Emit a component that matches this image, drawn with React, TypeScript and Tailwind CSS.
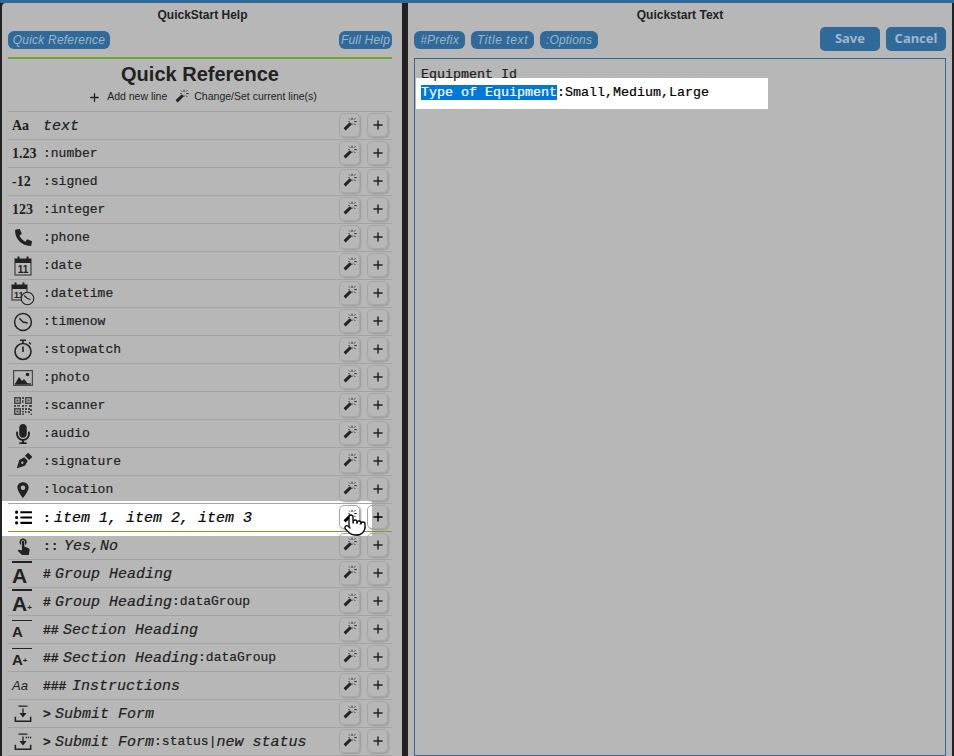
import React from 'react';
import { Plus, Pointer } from 'lucide-react';
import { FaPhoneAlt, FaMicrophone, FaListUl } from 'react-icons/fa';
import { IoLocationSharp } from 'react-icons/io5';
import { MdTouchApp } from 'react-icons/md';

const mono = "font-['Liberation_Mono','Courier_New',monospace] [-webkit-text-stroke:0.2px_currentColor]";

function WandIcon() {
  return (
    <svg width="16" height="16" viewBox="0 0 16 16" fill="none" stroke="currentColor">
      <path d="M2.6 12.4L8.8 6.2" strokeWidth="3" />
      <path d="M10 .8v2.2M10 6.4v1.4M12.2 4.6h2.6M6.4 4.6h1.2M12 2.6l1.4-1.4M12 6.6l1.4 1.4M8 2.6L7 1.6" strokeWidth="0.9" />
    </svg>
  );
}

function NibIcon() {
  return (
    <svg width="17" height="17" viewBox="0 0 17 17">
      <g transform="rotate(45 8.5 8.5)">
        <rect x="5.5" y="-1" width="6" height="4.5" fill="currentColor" />
        <path fillRule="evenodd" d="M8.5 18L4.5 10.5 6 5h5l1.5 5.5zM8.5 9a1.2 1.2 0 100 2.4 1.2 1.2 0 000-2.4z" fill="currentColor" />
      </g>
    </svg>
  );
}

function NumIcon({ label }: { label: string }) {
  return <span className="w-[30px] pl-[4px] font-['Liberation_Serif',serif] text-[14px] font-bold leading-none">{label}</span>;
}

function CalendarIcon() {
  return (
    <svg width="18" height="20" viewBox="0 0 18 20">
      <rect x="1" y="3" width="16" height="16" fill="none" stroke="currentColor" strokeWidth="1.2" opacity="0.8" />
      <rect x="1" y="3" width="16" height="4" fill="currentColor" />
      <rect x="3.5" y="0.5" width="2" height="4" fill="currentColor" />
      <rect x="12.5" y="0.5" width="2" height="4" fill="currentColor" />
      <text x="9" y="17" textAnchor="middle" fontFamily="Liberation Sans" fontWeight="700" fontSize="10" fill="currentColor">11</text>
    </svg>
  );
}

function DateTimeIcon() {
  return (
    <svg width="24" height="24" viewBox="0 0 24 24">
      <rect x="1" y="3" width="15" height="15" fill="none" stroke="currentColor" strokeWidth="1.2" opacity="0.8" />
      <rect x="1" y="3" width="15" height="4" fill="currentColor" />
      <rect x="3.5" y="0.5" width="2" height="4" fill="currentColor" />
      <rect x="11.5" y="0.5" width="2" height="4" fill="currentColor" />
      <text x="3" y="16" fontFamily="Liberation Sans" fontWeight="700" fontSize="9" fill="currentColor">11</text>
      <circle cx="16.5" cy="16.5" r="6.3" fill="#b7b7b7" stroke="currentColor" strokeWidth="1.1" />
      <path d="M13 13.5l3.5 3 3 1" fill="none" stroke="currentColor" strokeWidth="1.1" />
    </svg>
  );
}

function ClockIcon() {
  return (
    <svg width="20" height="20" viewBox="0 0 20 20">
      <circle cx="10" cy="10" r="8.4" fill="none" stroke="currentColor" strokeWidth="1.5" />
      <path d="M6.3 6.3L10 10l4.7 1" fill="none" stroke="currentColor" strokeWidth="1.4" />
    </svg>
  );
}

function StopwatchIcon() {
  return (
    <svg width="20" height="22" viewBox="0 0 20 22">
      <circle cx="10" cy="12.5" r="8" fill="none" stroke="currentColor" strokeWidth="1.6" />
      <path d="M7 1.2h6M10 1.2v3M10 7.5v5.5" fill="none" stroke="currentColor" strokeWidth="1.6" />
      <path d="M16 3.5l1.8 1.8" fill="none" stroke="currentColor" strokeWidth="1.5" />
    </svg>
  );
}

function PhotoIcon() {
  return (
    <svg width="20" height="16" viewBox="0 0 20 16">
      <rect x="0.6" y="0.6" width="18.8" height="14.8" fill="none" stroke="currentColor" strokeWidth="1.2" opacity="0.75" />
      <path d="M2 14l4-7 3 4 2-2 4 5z" fill="currentColor" />
      <rect x="2" y="13" width="16" height="2" fill="currentColor" opacity="0.7" />
      <circle cx="14.5" cy="4.5" r="1.8" fill="currentColor" />
    </svg>
  );
}

function QrIcon() {
  return (
    <svg width="18" height="18" viewBox="0 0 18 18" fill="currentColor" opacity="0.75">
      <path fillRule="evenodd" d="M0 0h7v7H0zM1.5 1.5v4h4v-4zM11 0h7v7h-7zM12.5 1.5v4h4v-4zM0 11h7v7H0zM1.5 12.5v4h4v-4z" />
      <path d="M2.5 2.5h2v2h-2zM13.5 2.5h2v2h-2zM2.5 13.5h2v2h-2zM8 0h2v2H8zM8 3h1.5v3H8zM0 8h2v2H0zM3 8h3v1.5H3zM8 8h2v2H8zM11 8h2v1.5h-2zM15 8h3v2h-3zM8 11h2v2H8zM11 11h2v2h-2zM14 11h2v2h-2zM8 14h2v1.5H8zM11 14h1.5v2H11zM14 14h2v2h-2zM16 12h2v2h-2zM8 16.5h2V18H8zM16.5 16.5H18V18h-1.5z" />
    </svg>
  );
}

function HeadingIcon({ large, plus }: { large?: boolean; plus?: boolean }) {
  return (
    <span className="-ml-[2px] flex w-[20px] flex-col items-start">
      <span className={large ? 'block h-[2px] w-[20px] bg-current' : 'block h-px w-[20px] bg-current'} />
      <span className={`flex items-end font-['Liberation_Sans',sans-serif] font-bold leading-none ${large ? 'mt-[2px] text-[21px]' : 'mt-[3px] text-[15px]'}`}>
        A{plus && <span className="mb-[2px] text-[8px] leading-none">+</span>}
      </span>
    </span>
  );
}

function SubmitIcon({ dots }: { dots?: boolean }) {
  return (
    <svg width="18" height="18" viewBox="0 0 20 20">
      <path d="M5 1.2h10M10 4v8" fill="none" stroke="currentColor" strokeWidth="1.4" />
      <path d="M6 9h8l-4 5z" fill="currentColor" />
      <path d="M1.5 13v5h17v-5" fill="none" stroke="currentColor" strokeWidth="1.7" />
      {dots && <path d="M13 5h7" fill="none" stroke="currentColor" strokeWidth="1.4" strokeDasharray="1.4 1" />}
    </svg>
  );
}

const I = ({ children }: { children: React.ReactNode }) => <span className="relative top-[1px] text-[15px] italic leading-none">{children}</span>;
const P = ({ children, className = '' }: { children: React.ReactNode; className?: string }) => (
  <span className={`relative top-[1px] inline-block text-[13px] font-bold leading-none ${className}`}>{children}</span>
);

const rows: { icon: React.ReactNode; text: React.ReactNode; active?: boolean }[] = [
  { icon: <NumIcon label="Aa" />, text: <I>text</I> },
  { icon: <NumIcon label="1.23" />, text: ':number' },
  { icon: <NumIcon label="-12" />, text: ':signed' },
  { icon: <NumIcon label="123" />, text: ':integer' },
  { icon: <FaPhoneAlt size={17} className="-scale-x-100 rotate-90" />, text: ':phone' },
  { icon: <CalendarIcon />, text: ':date' },
  { icon: <DateTimeIcon />, text: ':datetime' },
  { icon: <ClockIcon />, text: ':timenow' },
  { icon: <StopwatchIcon />, text: ':stopwatch' },
  { icon: <PhotoIcon />, text: ':photo' },
  { icon: <QrIcon />, text: ':scanner' },
  { icon: <FaMicrophone size={20} />, text: ':audio' },
  { icon: <NibIcon />, text: ':signature' },
  { icon: <IoLocationSharp size={18} />, text: ':location' },
  { icon: <FaListUl size={17} />, text: <><P className="w-[11px]">:</P><I>item 1, item 2, item 3</I></>, active: true },
  { icon: <MdTouchApp size={19} />, text: <><P className="w-[21px]">::</P><I>Yes,No</I></> },
  { icon: <HeadingIcon large />, text: <><P className="w-[12px]">#</P><I>Group Heading</I></> },
  { icon: <HeadingIcon large plus />, text: <><P className="w-[12px]">#</P><I>Group Heading</I>:dataGroup</> },
  { icon: <HeadingIcon />, text: <><P className="w-[20px]">##</P><I>Section Heading</I></> },
  { icon: <HeadingIcon plus />, text: <><P className="w-[20px]">##</P><I>Section Heading</I>:dataGroup</> },
  { icon: <span className="w-[30px] pl-[4px] font-['Liberation_Sans',sans-serif] text-[13px] italic">Aa</span>, text: <><P className="w-[29px]">###</P><I>Instructions</I></> },
  { icon: <SubmitIcon />, text: <><P className="w-[12px]">&gt;</P><I>Submit Form</I></> },
  { icon: <SubmitIcon dots />, text: <><P className="w-[12px]">&gt;</P><I>Submit Form</I>:status|<I>new status</I></> },
];

function SmallButton({ children }: { children: React.ReactNode }) {
  return (
    <button className="flex h-[24px] w-[21px] items-center justify-center rounded-[5px] border border-[#a6a6a6] shadow-[1px_1px_2px_#9a9a9a]">
      {children}
    </button>
  );
}

function Pill({ label, className }: { label: string; className: string }) {
  return (
    <span className={`flex h-[18px] items-center justify-center rounded-[6px] bg-[#2f6a9b] font-['Liberation_Sans',sans-serif] text-[12px] italic leading-none tracking-[0.2px] text-[#a0b4c4] ${className}`}>
      {label}
    </span>
  );
}

function Row({ icon, text, active }: { icon: React.ReactNode; text: React.ReactNode; active?: boolean }) {
  return (
    <div className={`flex h-[28px] items-center border-b ${active ? 'border-[#6fa52f] text-black' : 'border-[#a3a3a3] text-[#222]'}`}>
      <span className="flex w-[30px] justify-center">{icon}</span>
      <span className={`ml-[5px] flex-1 whitespace-pre text-[13px] ${mono}`}>{text}</span>
      <span className="-mt-[1px] flex gap-[7px] pr-[4px]">
        <SmallButton><WandIcon /></SmallButton>
        <SmallButton><Plus size={14} strokeWidth={2.5} /></SmallButton>
      </span>
    </div>
  );
}

export default function App() {
  return (
    <div className="flex h-[756px] w-[954px] flex-col overflow-hidden bg-[#222] font-['Liberation_Sans',Arial,sans-serif]">
      <div className="h-[3px] shrink-0 bg-[#2f6a9b]" />
      <div className="flex min-h-0 flex-1 pl-[2px] pr-[2px]">
        {/* Help panel */}
        <div className="relative w-[400px] shrink-0 overflow-hidden rounded-tl-[4px] bg-[#b7b7b7] pl-[6px] pr-[10px] text-[#222]">
          <div className="absolute left-0 top-[498px] h-[35px] w-[370px] bg-white" />
          <div className="relative">
            <div className="flex h-[24px] items-center justify-center pl-[5px] text-[12px] font-bold">QuickStart Help</div>
            <div className="mt-[4px] flex justify-between">
              <Pill label="Quick Reference" className="w-[102px]" />
              <Pill label="Full Help" className="w-[53px]" />
            </div>
            <div className="mt-[8px] h-[2px] bg-[#6fa52f]" />
            <div className="mt-[3px] flex h-[24px] items-center justify-center text-[20px] font-bold">Quick Reference</div>
            <div className="flex h-[22px] items-center justify-center pl-[5px] text-[10.5px]">
              <Plus size={13} strokeWidth={2.5} />
              <span className="ml-[6px]">Add new line</span>
              <span className="ml-[7px]"><WandIcon /></span>
              <span className="ml-[4px]">Change/Set current line(s)</span>
            </div>
            <div className="mt-[3px] border-t border-[#a3a3a3]">
              {rows.map((r, i) => (
                <Row key={i} icon={r.icon} text={r.text} active={r.active} />
              ))}
            </div>
          </div>
          <Pointer size={24} fill="white" strokeWidth={1.3} className="absolute left-[341px] top-[510px] text-black" />
        </div>

        <div className="w-[6px] shrink-0" />

        {/* Text panel */}
        <div className="flex min-w-0 flex-1 flex-col bg-[#b7b7b7] pl-[6px] pr-[6px] text-[#222]">
          <div className="flex h-[24px] shrink-0 items-center justify-center text-[12px] font-bold">Quickstart Text</div>
          <div className="flex h-[24px] shrink-0 items-start justify-between">
            <div className="mt-[4px] flex gap-[6px]">
              <Pill label="#Prefix" className="w-[51px]" />
              <Pill label="Title text" className="w-[63px] tracking-[0.6px]" />
              <Pill label=":Options" className="w-[58px]" />
            </div>
            <div className="flex gap-[6px]">
              <button className="h-[24px] w-[60px] rounded-[5px] bg-[#2f6a9b] font-['Noto_Sans',sans-serif] text-[13px] font-bold text-[#a3b6c6]">Save</button>
              <button className="h-[24px] w-[60px] rounded-[5px] bg-[#2f6a9b] font-['Noto_Sans',sans-serif] text-[13px] font-bold text-[#a3b6c6]">Cancel</button>
            </div>
          </div>
          <div className={`relative mt-[7px] flex-1 border border-[#2f6a9b] px-[6px] pt-[7px] text-[13.33px] leading-[18px] ${mono}`}>
            <div className="absolute left-[1px] top-[19px] h-[31px] w-[352px] bg-white" />
            <div className="relative">Equipment Id</div>
            <div className="relative text-black">
              <span className="bg-[#0078d7] text-white">Type of Equipment</span>:Small,Medium,Large
            </div>
          </div>
        </div>
      </div>
    </div>
  );
}
